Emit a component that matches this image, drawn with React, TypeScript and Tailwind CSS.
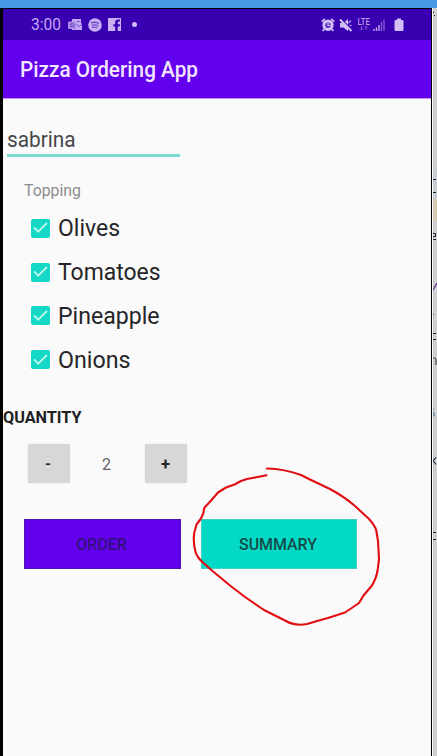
import React, { useState } from "react";

const toppings = [
  { label: "Olives", width: 62 },
  { label: "Tomatoes", width: 102.5 },
  { label: "Pineapple", width: 101.5 },
  { label: "Onions", width: 72.5 },
];

function FitText({ children, width, size, weight = 400, baseline }: {
  children: string; width: number; size: number; weight?: number; baseline: number;
}) {
  return (
    <svg width={width + 2} height={size + 8} className="block shrink-0 overflow-visible fill-current">
      <text x="0" y={baseline} textLength={width} lengthAdjust="spacingAndGlyphs" fontSize={size} fontWeight={weight}>
        {children}
      </text>
    </svg>
  );
}

function StatusBar() {
  return (
    <div className="flex h-[31px] items-center bg-[#3800b0] pl-[28px] text-[#c3a8f2]">
      <div className="w-[37px]"><FitText width={30} size={16.5} baseline={18}>3:00</FitText></div>
      <svg width="15" height="14" viewBox="0 0 15 14" className="block">
        <path d="M4 1h9v4l1 1v6H4z" fill="#c3a8f2" />
        <rect x="0" y="3.5" width="8" height="7.5" rx="1" fill="#a98be4" />
        <circle cx="4.2" cy="7.2" r="1.7" fill="none" stroke="#6a3fc8" />
        <path d="M8.5 6.5l2.7 2 2.5-2M9 3.5h2.5" fill="none" stroke="#6a3fc8" />
      </svg>
      <svg width="14" height="14" viewBox="0 0 14 14" className="ml-[5px] block">
        <circle cx="7" cy="7" r="6.8" fill="#c9b1f4" />
        <path d="M3 4.8q4-1.3 8 .5M3.5 7.2q3.5-1 7 .5M4 9.5q3-.8 5.5.5" fill="none" stroke="#7549cc" strokeWidth="1.3" />
      </svg>
      <svg width="13" height="13" viewBox="0 0 13 13" className="ml-[6px] block">
        <path d="M0 0h13v13H9.7V8.6h2L12 6.3H9.7V4.6q0-1 1.2-1H12V1.5h-2Q7.2 1.5 7.2 4.3v2H5.4v2.3h1.8V13H0z" fill="#c9b1f4" />
      </svg>
      <span className="ml-[11px] size-[5px] rounded-full bg-[#d2bff6]" />
      <div className="ml-auto flex items-center pr-[27px]">
        <svg width="14" height="14" viewBox="0 0 14 14" className="block">
          <path d="M.8 3.8L3.8 1M10.2 1l3 2.8M3.2 11l-1.5 2M10.8 11l1.5 2" stroke="#c9b1f4" strokeWidth="2" />
          <circle cx="7" cy="7.3" r="4.2" fill="#5a2bc0" stroke="#d2bff6" strokeWidth="3" />
          <path d="M7 4.5v3h2.5" fill="none" stroke="#d2bff6" strokeWidth="1.2" />
        </svg>
        <svg width="14" height="14" viewBox="0 0 14 14" className="ml-[4px] block">
          <path d="M1 5h3.5L9 1v12L4.5 9.5H1z" fill="#d2bff6" />
          <path d="M1.8 .8l11 11" stroke="#3800b0" strokeWidth="1.4" />
          <path d="M1 1.5l11.5 11.5" stroke="#d2bff6" strokeWidth="2" />
          <path d="M9.5 5L12 2.5M10.5 7.5h2" stroke="#a98be4" strokeWidth="1.5" />
        </svg>
        <svg width="14" height="15" viewBox="0 0 14 15" className="ml-[4px] block">
          <text x="0.5" y="7.5" fontSize="9" fontWeight="500" textLength="12.5" lengthAdjust="spacingAndGlyphs" fill="#b99ced">LTE</text>
          <path d="M4.5 9v4m-1.5-1.5l1.5 1.5L6 11.5M9 13V9M7.5 10.5L9 9l1.5 1.5" fill="none" stroke="#8052ce" />
        </svg>
        <svg width="13" height="13" viewBox="0 0 13 13" className="ml-[2px] block">
          <path d="M1 13v-2M3.5 13V9.5M6 13V7" stroke="#c3a8f2" strokeWidth="1.4" />
          <path d="M8.5 13V4M11 13V1.5" stroke="#8158d0" strokeWidth="1.4" />
        </svg>
        <svg width="10" height="14" viewBox="0 0 10 14" className="ml-[8px] block">
          <path d="M3 .5h4V2h1.3q1.2 0 1.2 1.2v8.6q0 1.2-1.2 1.2H1.7Q.5 13 .5 11.8V3.2Q.5 2 1.7 2H3z" fill="#d2bff6" />
        </svg>
      </div>
    </div>
  );
}

function Topping({ label, width }: { label: string; width: number }) {
  const [checked, setChecked] = useState(true);
  return (
    <button role="checkbox" aria-checked={checked} onClick={() => setChecked(!checked)} className="flex h-[43.8px] items-center text-[#252527]">
      <span className="mr-[8px] mt-px flex size-[19px] items-center justify-center rounded-[2px] bg-[#14d8c5]">
        {checked && (
          <svg width="15" height="12" viewBox="0 0 15 12">
            <path d="M1 5.5l4.2 4.2L14 1" fill="none" stroke="#b9f8ef" strokeWidth="1.8" />
          </svg>
        )}
      </span>
      <FitText width={width} size={23.5} baseline={24.3}>{label}</FitText>
    </button>
  );
}

function BackgroundEdge() {
  return (
    <div className="w-[4px] shrink-0 overflow-hidden bg-[#d0d0d0]">
      <svg width="4" height="748" viewBox="433 8 4 748" className="block">
        <rect x="433" y="8" width="1" height="748" fill="#c4c4c4" />
        <rect x="433" y="170" width="4" height="28" fill="#c7cdd2" />
        <rect x="433" y="199" width="4" height="22" fill="#d4cab3" />
        <path d="M433 12.5h1M434 15.5h1M433 179.5h3M433 192.5h3M433 333.5h3M433 339.5h3M433 532.5h3M433 539.5h3M433 239.5h3" stroke="#17222e" />
        <path d="M433 233.5h2.5v3H433" fill="none" stroke="#17222e" />
        <path d="M433 290l4-7" stroke="#6b398d" strokeWidth="1.3" />
        <path d="M433 314.5h1" stroke="#58406a" />
        <path d="M433 358h2q1 0 1 2v5" fill="none" stroke="#444" strokeWidth="1.2" />
        <path d="M433 409h1M433 412l1 1v3h-1" fill="none" stroke="#39779c" />
        <path d="M436 457.5l-3 3 3 4" fill="none" stroke="#20364b" strokeWidth="1.2" />
      </svg>
    </div>
  );
}

export default function App() {
  const [quantity, setQuantity] = useState(2);
  const step = "flex h-[39px] w-[42px] items-center justify-center rounded-[2px] bg-[#d7d7d7] text-[#252527] shadow-[0_0_1px_#bbb]";
  return (
    <div className="flex h-[756px] w-[437px] flex-col overflow-hidden bg-[#4697e4] pt-[8px] font-['Roboto',sans-serif]">
      <div className="flex min-h-0 flex-1">
        <main className="flex w-[432px] shrink-0 flex-col border-t border-r border-l-[3px] border-black bg-[#fafafa]">
          <StatusBar />
          <header className="flex h-[59px] items-center border-b border-[#c990fa] bg-[#6200ee] pl-[17px] text-[#f4e5ff]">
            <FitText width={178} size={21.5} weight={500} baseline={23}>Pizza Ordering App</FitText>
          </header>
          <section className="relative flex flex-1 flex-col">
            <div className="ml-[4px] mt-[27px] flex h-[31px] w-[173px] items-center border-b-[3px] border-[#79d8d0] text-[#464648]">
              <FitText width={68.5} size={21.5} baseline={21.5}>sabrina</FitText>
            </div>
            <div className="ml-[21px] mt-[20px] flex h-[26px] items-center text-[#8c8c8e]">
              <FitText width={57} size={16} baseline={18}>Topping</FitText>
            </div>
            <div className="ml-[28px] mt-[3px] flex flex-col items-start">
              {toppings.map((item) => <Topping key={item.label} {...item} />)}
            </div>
            <div className="mt-[22px] flex h-[26px] items-center text-[#202022]">
              <FitText width={78.5} size={16} weight={700} baseline={18.5}>QUANTITY</FitText>
            </div>
            <div className="ml-[24.5px] mt-[15px] flex items-center">
              <button className={step} onClick={() => setQuantity(Math.max(0, quantity - 1))}><FitText width={6} size={15} weight={700} baseline={16.5}>-</FitText></button>
              <div className="flex w-[75.5px] justify-center text-[#636365]"><FitText width={9} size={16} baseline={17.5}>{String(quantity)}</FitText></div>
              <button className={step} onClick={() => setQuantity(quantity + 1)}><FitText width={9} size={16} weight={700} baseline={17.5}>+</FitText></button>
            </div>
            <div className="ml-[21px] mt-[36px] flex gap-[20px]">
              <button className="flex h-[50px] w-[157px] items-center justify-center border border-[#5414b3] bg-[#6200ee] text-[#34107d]"><FitText width={51} size={16} weight={500} baseline={18}>ORDER</FitText></button>
              <button className="flex h-[50px] w-[156px] items-center justify-center border border-[#41cfc3] bg-[#03dac5] text-[#154a48]"><FitText width={78} size={16} weight={500} baseline={18}>SUMMARY</FitText></button>
            </div>
            <svg width="188" height="162" viewBox="191 466 188 162" className="pointer-events-none absolute left-[188px] top-[367px] overflow-visible">
              <path d="M266.5 475.3L255 477.5L247 479L241 481L234.5 484.5L226 487.5L218 492.5L211.5 500L204.2 508L203.4 513L201 518.5L196.5 524.5L194.2 533Q193 542 195.3 551Q196.5 557 203.5 563L212.5 571L230 585.5L245 597L264 610L285 620.5Q295 626.5 307 624L318 620.8L328 618L345 612.5L351 608.5L359 603L363.5 595.5L372 585.5Q376.5 578 377.8 569L379 559L378 541L376.2 530Q374.8 525.5 369 519L355 506Q344 496.5 330 489L310 479.5L301 475Q285 469 266.8 468.5" fill="none" stroke="#e20d12" strokeWidth="2.1" strokeLinecap="round" strokeLinejoin="round" />
            </svg>
          </section>
        </main>
        <div className="w-px shrink-0 bg-white" />
        <BackgroundEdge />
      </div>
    </div>
  );
}
